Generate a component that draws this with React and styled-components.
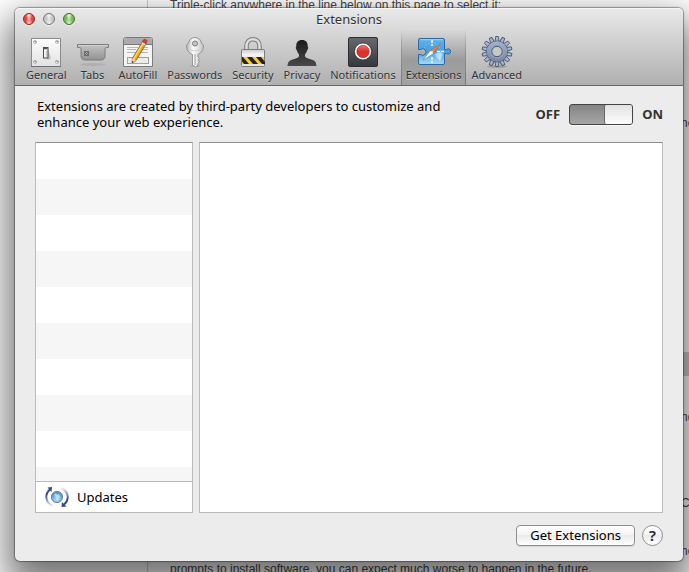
import React, { useState } from 'react'
import styled, { createGlobalStyle } from 'styled-components'

const GlobalStyle = createGlobalStyle`
  *, *::before, *::after {
    box-sizing: border-box;
  }

  body {
    margin: 0;
    background: white;
    font-family: "Noto Sans", "Open Sans", sans-serif;
    font-size: 13px;
    color: black;
  }

  button {
    all: unset;
    box-sizing: border-box;
    cursor: default;
  }

  svg {
    display: block;
  }
`

const GeneralIcon = () => (
  <svg width="32" height="32" viewBox="0 0 32 32" aria-hidden="true">
    <defs>
      <linearGradient id="plate" x1="0" y1="0" x2="0" y2="1">
        <stop offset="0" stopColor="#fdfdfd" />
        <stop offset="1" stopColor="#e2e2e2" />
      </linearGradient>
    </defs>
    <rect x="1.5" y="2.5" width="29" height="28" fill="url(#plate)" stroke="#8a8a8a" />
    <path d="M1 30.5h30" stroke="#6e6e6e" />
    {[[5, 6], [27, 6], [5, 26], [27, 26]].map(([x, y]) => (
      <g key={`${x}-${y}`}>
        <circle cx={x} cy={y} r="1.8" fill="#8c8c8c" />
        <circle cx={x - 0.3} cy={y + 0.4} r="1" fill="#ededed" />
      </g>
    ))}
    <path d="M18 13l3 9-2 2-3-1z" fill="#c4c4c4" />
    <rect x="13.5" y="11.5" width="4.500" height="10.500" fill="#f4f4f4" stroke="#4c4c4c" />
    <path d="M14 12.500h3.500" stroke="#555" strokeWidth="1.500" />
    <path d="M17 15v6" stroke="#999" />
  </svg>
)

const TabsIcon = () => (
  <svg width="32" height="32" viewBox="0 0 32 32" aria-hidden="true">
    <defs>
      <linearGradient id="tab" x1="0" y1="0" x2="0" y2="1">
        <stop offset="0" stopColor="#c4c4c4" />
        <stop offset="1" stopColor="#929292" />
      </linearGradient>
    </defs>
    <ellipse cx="16" cy="28.5" rx="13" ry="1.5" fill="#a5a5a5" opacity=".6" />
    <path
      d="M.5 8.500h31v3h-2c-1.300 0-1.500.8-1.500 2v6c0 3-1.500 4.500-4 4.500h-16c-2.500 0-4-1.500-4-4.500v-6c0-1.200-.2-2-1.500-2h-2z"
      fill="url(#tab)"
      stroke="#7a7a7a"
    />
    <path d="M1 9.500h30" stroke="#d2d2d2" />
    <path d="M7.500 15.500h4v4h-4zM7.500 15.500l4 4M11.500 15.500l-4 4" fill="none" stroke="#606060" strokeWidth=".8" />
  </svg>
)

const AutoFillIcon = () => (
  <svg width="32" height="32" viewBox="0 0 32 32" aria-hidden="true">
    <path d="M1.500 30.500v-27q0-2 2-2h25q2 0 2 2v27z" fill="#f4f4f4" stroke="#7b7b7b" />
    <path d="M2 8V4q0-2 2-2h24q2 0 2 2v4z" fill="#ababab" />
    <path d="M2 8.500h28" stroke="#777" />
    <path d="M5 11.500h11M5 13.500h9M5 16.500h10M19 11.500h7M18 13.500h8M17 16.500h9" stroke="#b8b8b8" />
    <rect x="5.500" y="21.500" width="21" height="6" fill="#ececec" stroke="#a0a0a0" />
    <path d="M12 26l12-19" stroke="#555" strokeWidth="2" opacity=".3" />
    <path d="M20.200 6l3.600 2-9.800 16.500L10 27l.3-4.500z" fill="#f1a727" stroke="#84540f" strokeWidth=".7" />
    <path d="M21.200 7.300l-9.700 16" stroke="#ffe07a" strokeWidth="1.200" />
    <path d="M10 27l.3-4.500 3.500 2z" fill="#f3d6a7" />
    <path d="M10 27l.2-2 1.500.9z" fill="#222" />
    <path d="M20.200 5.800l1-1.800q1.500-1.300 3 -.300t.8 2.300l-1 1.800z" fill="#d83d35" stroke="#872d2a" strokeWidth=".5" />
    <path d="M19.900 6.800l3.400 2" stroke="#cdd6e0" strokeWidth="1.600" />
  </svg>
)

const PasswordsIcon = () => (
  <svg width="32" height="32" viewBox="0 0 32 32" aria-hidden="true">
    <defs>
      <linearGradient id="key" x1="0" y1="0" x2="1" y2="0">
        <stop offset="0" stopColor="#b4b4b4" />
        <stop offset=".4" stopColor="#fdfdfd" />
        <stop offset="1" stopColor="#c2c2c2" />
      </linearGradient>
    </defs>
    <ellipse cx="16" cy="30" rx="5" ry="1" fill="#999" opacity=".5" />
    <path
      d="M13.500 18.500C9.500 17 7.500 13.500 7.500 10q0-2 2-2.500.5-5.500 6.500-6 6 .5 6.500 6 2 .5 2 2.500c0 3.500-2 7-5.500 8.500v2.500l1.500 1.500-1.500 1.500 1.500 2-1.500 1.500v1.500L16.500 31l-3-2z"
      fill="url(#key)"
      stroke="#8c8c8c"
      strokeWidth=".9"
    />
    <circle cx="16" cy="7.500" r="2.500" fill="#c4c4c4" stroke="#7d7d7d" />
    <path d="M16 18v11" stroke="#9a9a9a" />
    <path d="M10 13q6 4 12 0" stroke="#d0d0d0" fill="none" />
  </svg>
)

const SecurityIcon = () => (
  <svg width="32" height="32" viewBox="0 0 32 32" aria-hidden="true">
    <defs>
      <linearGradient id="lock" x1="0" y1="0" x2="0" y2="1">
        <stop offset="0" stopColor="#c9c9c9" />
        <stop offset=".3" stopColor="#f4f4f4" />
        <stop offset="1" stopColor="#d4d4d4" />
      </linearGradient>
      <clipPath id="tape">
        <rect x="5" y="21" width="23" height="7" />
      </clipPath>
    </defs>
    <path d="M9.500 14v-4c0-9 13-9 13 0v4" fill="none" stroke="#7a7a7a" strokeWidth="4.500" />
    <path d="M9.500 14v-4c0-9 13-9 13 0v4" fill="none" stroke="#dedede" strokeWidth="2.500" />
    <rect x="4.500" y="13.500" width="23" height="17" rx="1" fill="url(#lock)" stroke="#7c7c7c" />
    <rect x="5" y="21" width="22" height="7" fill="#fcc93d" />
    <path
      d="M2 21h4l6 7h-5zM10 21h5l6 7h-5zM19 21h5l4 5v2h-3z"
      fill="#272522"
      clipPath="url(#tape)"
    />
    <path d="M5 29h22" stroke="#f0f0f0" />
  </svg>
)

const PrivacyIcon = () => (
  <svg width="32" height="32" viewBox="0 0 32 32" aria-hidden="true">
    <defs>
      <linearGradient id="person" x1="0" y1="0" x2="0" y2="1">
        <stop offset="0" stopColor="#1b1b1b" />
        <stop offset="1" stopColor="#494949" />
      </linearGradient>
    </defs>
    <path
      d="M16 4c4 0 6 2.500 5.700 6.500 1 .5.500 2.600-.4 3.500-.5 2-1.300 3.200-2.300 4.200v2c0 1.200 2 2 5.500 3 4.500 1.300 5.500 2.500 6 6.800h-29c.5-4.300 1.500-5.500 6-6.800 3.500-1 5.500-1.800 5.500-3v-2c-1-1-1.800-2.200-2.300-4.200-.9-.9-1.400-3-.4-3.500C10 6.500 12 4 16 4z"
      fill="url(#person)"
    />
  </svg>
)

const NotificationsIcon = () => (
  <svg width="32" height="32" viewBox="0 0 32 32" aria-hidden="true">
    <defs>
      <linearGradient id="notice" x1="0" y1="0" x2="0" y2="1">
        <stop offset="0" stopColor="#67696e" />
        <stop offset="1" stopColor="#36373b" />
      </linearGradient>
      <linearGradient id="record" x1="0" y1="0" x2="0" y2="1">
        <stop offset="0" stopColor="#f1736a" />
        <stop offset=".5" stopColor="#dd2f28" />
        <stop offset="1" stopColor="#d8352f" />
      </linearGradient>
    </defs>
    <rect x="1.500" y="1.500" width="29" height="29" rx="1.500" fill="url(#notice)" stroke="#2d2e31" />
    <circle cx="16" cy="15.500" r="8.500" fill="#fff" stroke="#222" strokeWidth=".7" />
    <circle cx="16" cy="15.500" r="6.200" fill="url(#record)" stroke="#a22" strokeWidth=".6" />
  </svg>
)

const ExtensionsIcon = () => (
  <svg width="34" height="32" viewBox="0 0 34 32" aria-hidden="true">
    <defs>
      <linearGradient id="puzzle" x1="0" y1="0" x2="0" y2="1">
        <stop offset="0" stopColor="#5db4ea" />
        <stop offset=".5" stopColor="#4a9edb" />
        <stop offset="1" stopColor="#a3dcf6" />
      </linearGradient>
    </defs>
    <path
      d="M1.500 4q0-1.500 1.500-1.500h23q1.500 0 1.500 1.500v9.500h2a2.600 2.600 0 1 1 0 4h-2V27q0 1.500-1.500 1.500H3q-1.500 0-1.500-1.500v-8.500h2a3.300 3.300 0 1 0 0-5h-2z"
      fill="url(#puzzle)"
      stroke="#2d6aa3"
    />
    <path d="M3 3.700h23" stroke="#9bd7f5" />
    <circle cx="15" cy="15.500" r="8.500" fill="none" stroke="#a5dcfa" opacity=".7" strokeDasharray="1 2" />
    <path d="M15 4v6M15 21v6M20 15.500h7" stroke="#f0fbff" strokeWidth="1.500" strokeDasharray="3 1" />
    <path d="M18 18l5-2 3 2-3 7-3-3z" fill="#d4f3fb" opacity=".7" />
    <path d="M6 24l7.500-9.500 3 3z" fill="#fff" stroke="#527d9d" strokeWidth=".5" />
    <path d="M23.500 7.500l-10 7 3 3z" fill="#ed7d45" stroke="#a45a36" strokeWidth=".4" />
    <circle cx="15" cy="16" r="1" fill="#e9f4fa" />
  </svg>
)

const teeth = Array.from({ length: 14 }, (_, i) => (i * 360) / 14)

const AdvancedIcon = () => (
  <svg width="32" height="32" viewBox="0 0 32 32" aria-hidden="true">
    <defs>
      <linearGradient id="gear" gradientUnits="userSpaceOnUse" x1="0" y1="0" x2="0" y2="32">
        <stop offset="0" stopColor="#aebdd8" />
        <stop offset="1" stopColor="#6d7896" />
      </linearGradient>
    </defs>
    <ellipse cx="16" cy="30.500" rx="10" ry="1.500" fill="#777" opacity=".5" />
    <g fill="url(#gear)" stroke="#4b566f" strokeWidth=".9">
      {teeth.map((angle) => (
        <path key={angle} d="M14 6l.7-5.500h2.600L18 6z" transform={`rotate(${angle} 16 15.500)`} />
      ))}
      <circle cx="16" cy="15.500" r="10.500" />
    </g>
    <circle cx="16" cy="15.500" r="10.300" fill="url(#gear)" />
    <circle cx="16" cy="15.500" r="6.500" fill="none" stroke="#9aa6c0" />
    <circle cx="16" cy="15.500" r="5.200" fill="#c8c8ca" stroke="#4b566f" />
  </svg>
)

const UpdatesIcon = () => (
  <svg width="24" height="24" viewBox="0 0 24 24" aria-hidden="true">
    <defs>
      <radialGradient id="globe" cx=".5" cy=".7" r=".6">
        <stop offset="0" stopColor="#b5e9ff" />
        <stop offset="1" stopColor="#4b8fce" />
      </radialGradient>
      <linearGradient id="arcLeft" x1="0" y1="0" x2="0" y2="1">
        <stop offset=".3" stopColor="#34458a" />
        <stop offset="1" stopColor="#34458a" stopOpacity=".1" />
      </linearGradient>
      <linearGradient id="arcRight" x1="0" y1="1" x2="0" y2="0">
        <stop offset=".3" stopColor="#34458a" />
        <stop offset="1" stopColor="#34458a" stopOpacity=".1" />
      </linearGradient>
    </defs>
    <circle cx="12" cy="12" r="5.600" fill="url(#globe)" stroke="#77818d" />
    <path d="M9 10l2-2 1 2 2-1 1 3-3 3-1-3z" fill="#e0f7ff" opacity=".6" />
    <path d="M5 4.500C-.5 9 0 17 7.500 21" fill="none" stroke="url(#arcLeft)" strokeWidth="2" />
    <path d="M19 19.500C24.500 15 24 7 16.500 3" fill="none" stroke="url(#arcRight)" strokeWidth="2" />
    <path d="M2.500 2.500l4.500-.5-.5 5zM21.500 21.500l-5 .5.500-5z" fill="#34458a" />
  </svg>
)

const panes = [
  { name: 'General', Icon: GeneralIcon },
  { name: 'Tabs', Icon: TabsIcon },
  { name: 'AutoFill', Icon: AutoFillIcon },
  { name: 'Passwords', Icon: PasswordsIcon },
  { name: 'Security', Icon: SecurityIcon },
  { name: 'Privacy', Icon: PrivacyIcon },
  { name: 'Notifications', Icon: NotificationsIcon },
  { name: 'Extensions', Icon: ExtensionsIcon },
  { name: 'Advanced', Icon: AdvancedIcon },
]

const App = () => {

  const [pane, setPane] = useState('Extensions')
  const [enabled, setEnabled] = useState(true)

  return (
    <Desktop>
      <GlobalStyle />

      <PageBehind>
        <Article>
          <p>Triple-click anywhere in the line below on this page to select it:</p>
          <p>prompts to install software, you can expect much worse to happen in the future.</p>
        </Article>
        <Margin>
          <MarginText $space={115}>ne</MarginText>
          <MarginBar />
          <MarginText $space={33}>nd</MarginText>
          <MarginText $space={70}>C</MarginText>
          <MarginText $space={32}>ne</MarginText>
        </Margin>
      </PageBehind>

      <Window>
        <Header>
          <TitleBar>
            <Lights>
              <Light type="button" aria-label="Close" $color="#e2463f" $edge="#8f2b29" />
              <Light type="button" aria-label="Minimize" $color="#c5c5c5" $edge="#777777" />
              <Light type="button" aria-label="Zoom" $color="#77b957" $edge="#447030" />
            </Lights>
            <Title>{pane}</Title>
          </TitleBar>
          <Toolbar>
            {panes.map(({ name, Icon }) => (
              <ToolbarButton
                key={name}
                type="button"
                aria-pressed={pane === name}
                $active={pane === name}
                onClick={() => setPane(name)}
              >
                <Icon />
                {name}
              </ToolbarButton>
            ))}
          </Toolbar>
        </Header>

        <Content>
          <Intro>
            <Description>
              Extensions are created by third-party developers to customize and enhance your web experience.
            </Description>
            <SwitchRow>
              <SwitchLabel htmlFor="extensions-switch">OFF</SwitchLabel>
              <Switch
                id="extensions-switch"
                type="checkbox"
                checked={enabled}
                onChange={(e) => setEnabled(e.target.checked)}
              />
              <SwitchLabel htmlFor="extensions-switch">ON</SwitchLabel>
            </SwitchRow>
          </Intro>

          <Panels>
            <Sidebar>
              <ExtensionList />
              <UpdatesButton type="button">
                <UpdatesIcon />
                Updates
              </UpdatesButton>
            </Sidebar>
            <Detail />
          </Panels>

          <Footer>
            <PushButton type="button">Get Extensions</PushButton>
            <HelpButton type="button">?</HelpButton>
          </Footer>
        </Content>
      </Window>
    </Desktop>
  )
}

export default App

const Desktop = styled.div`
  position: relative;
  display: flex;
  min-height: 100vh;
  padding: 8px 6px 11px 15px;
  overflow: hidden;
`
const PageBehind = styled.div`
  position: absolute;
  inset: 0;
  display: flex;
  justify-content: space-between;
  overflow: hidden;
  color: #444;
  font-family: "Liberation Sans", Arial, sans-serif;
  font-size: 12px;
  line-height: 16px;

  p {
    margin: 0;
  }
`
const Article = styled.div`
  display: flex;
  flex-direction: column;
  justify-content: space-between;
  margin-left: 147px;
  padding-left: 22px;
  border-left: 1px solid #ccc;
  white-space: nowrap;

  p:first-child {
    margin-top: -3px;
  }

  p:last-child {
    margin-bottom: -5px;
  }
`
const Margin = styled.div`
  width: 8px;
`
const MarginText = styled.p`
  && {
    margin-top: ${(props) => props.$space}px;
  }
`
const MarginBar = styled.div`
  height: 24px;
  margin-top: 221px;
  background: #ccc;
`
const Window = styled.main`
  position: relative;
  display: flex;
  flex: 1;
  flex-direction: column;
  min-width: 0;
  border-radius: 5px;
  background: #ececec;
  box-shadow: 0 0 1px 1px rgba(0, 0, 0, 0.35), 0 18px 36px 8px rgba(0, 0, 0, 0.55);
`
const Header = styled.header`
  border-bottom: 1px solid #686868;
  border-radius: 5px 5px 0 0;
  background: linear-gradient(#e9e9e9, #b0b0b0);
  box-shadow: inset 0 1px #f6f6f6;
`
const TitleBar = styled.div`
  display: grid;
  grid-template-columns: 1fr auto 1fr;
  align-items: center;
  height: 22px;
  padding: 0 8px;
`
const Lights = styled.div`
  display: flex;
  gap: 8px;
`
const Light = styled.button`
  && {
    width: 12px;
    height: 12px;
    border: 1px solid ${(props) => props.$edge};
    border-radius: 50%;
    background:
      radial-gradient(ellipse at 50% 15%, rgba(255, 255, 255, 0.9), transparent 45%),
      radial-gradient(ellipse at 50% 95%, rgba(255, 255, 255, 0.8), transparent 50%),
      ${(props) => props.$color};
    box-shadow: 0 1px #f0f0f0;
  }
`
const Title = styled.h1`
  margin: 0;
  font-size: 13px;
  font-weight: 400;
  color: #333;
  text-shadow: 0 1px rgba(255, 255, 255, 0.5);
`
const Toolbar = styled.nav`
  display: flex;
  padding: 0 6px;
`
const ToolbarButton = styled.button`
  && {
    display: flex;
    flex-direction: column;
    align-items: center;
    height: 55px;
    padding: 6px 4px 0;
    border: solid transparent;
    border-width: 0 1px;
    border-image: ${(props) => (props.$active ? 'linear-gradient(transparent, #888 60%, #777) 1' : 'none')};
    background: ${(props) => (props.$active ? 'linear-gradient(transparent, rgba(0, 0, 0, 0.2) 55%, rgba(0, 0, 0, 0.08))' : 'none')};
    color: #333;
    font-size: 11px;
    line-height: 14px;
    text-shadow: 0 1px rgba(255, 255, 255, 0.4);
  }
`
const Content = styled.section`
  display: flex;
  flex: 1;
  flex-direction: column;
  padding: 12px 20px 15px;
`
const Intro = styled.div`
  display: flex;
  justify-content: space-between;
  align-items: center;
`
const Description = styled.p`
  max-width: 450px;
  margin: 0;
  padding: 0 0 0 2px;
  line-height: 16px;
`
const SwitchRow = styled.div`
  display: flex;
  align-items: center;
  gap: 9px;
`
const SwitchLabel = styled.label`
  font-size: 13px;
  font-weight: 700;
  line-height: 16px;
  color: #333;
`
const Switch = styled.input`
  appearance: none;
  width: 64px;
  height: 21px;
  margin: 0;
  border: 1px solid #444;
  border-radius: 3px;
  background: linear-gradient(#858585, #a5a5a5);
  box-shadow: 0 1px #f8f8f8;

  &::before {
    content: "";
    display: block;
    width: 28px;
    height: 19px;
    border-left: 1px solid #666;
    border-radius: 2px;
    background: linear-gradient(#e2e2e2, #fcfcfc);
  }

  &:checked::before {
    margin-left: auto;
  }
`
const Panels = styled.div`
  display: flex;
  flex: 1;
  gap: 6px;
  margin: 12px 0;
`
const Sidebar = styled.aside`
  display: flex;
  flex-direction: column;
  width: 158px;
  border: 1px solid #bbb;
  border-top-color: #8e8e8e;
  background: white;
`
const ExtensionList = styled.ul`
  flex: 1;
  margin: 0;
  padding: 0;
  background: repeating-linear-gradient(white 0 36px, #f6f6f6 36px 72px);
`
const UpdatesButton = styled.button`
  && {
    display: flex;
    align-items: center;
    gap: 8px;
    height: 31px;
    padding: 0 9px;
    border-top: 1px solid #bbb;
  }
`
const Detail = styled.section`
  flex: 1;
  border: 1px solid #bbb;
  border-top-color: #8e8e8e;
  background: white;
`
const Footer = styled.footer`
  display: flex;
  justify-content: flex-end;
  gap: 7px;
`
const PushButton = styled.button`
  && {
    height: 21px;
    padding: 0 13px;
    border: 1px solid #8e8e8e;
    border-radius: 4px;
    background: linear-gradient(#ffffff, #f3f3f3 50%, #ebebeb 50%, #ffffff);
    box-shadow: 0 1px #d5d5d5;
    line-height: 19px;
  }
`
const HelpButton = styled.button`
  && {
    width: 21px;
    height: 21px;
    border: 1px solid #8e8e8e;
    border-radius: 50%;
    background: linear-gradient(#ffffff, #f3f3f3 50%, #ebebeb 50%, #ffffff);
    color: #222;
    font-size: 15px;
    font-weight: 600;
    line-height: 19px;
    text-align: center;
  }
`
